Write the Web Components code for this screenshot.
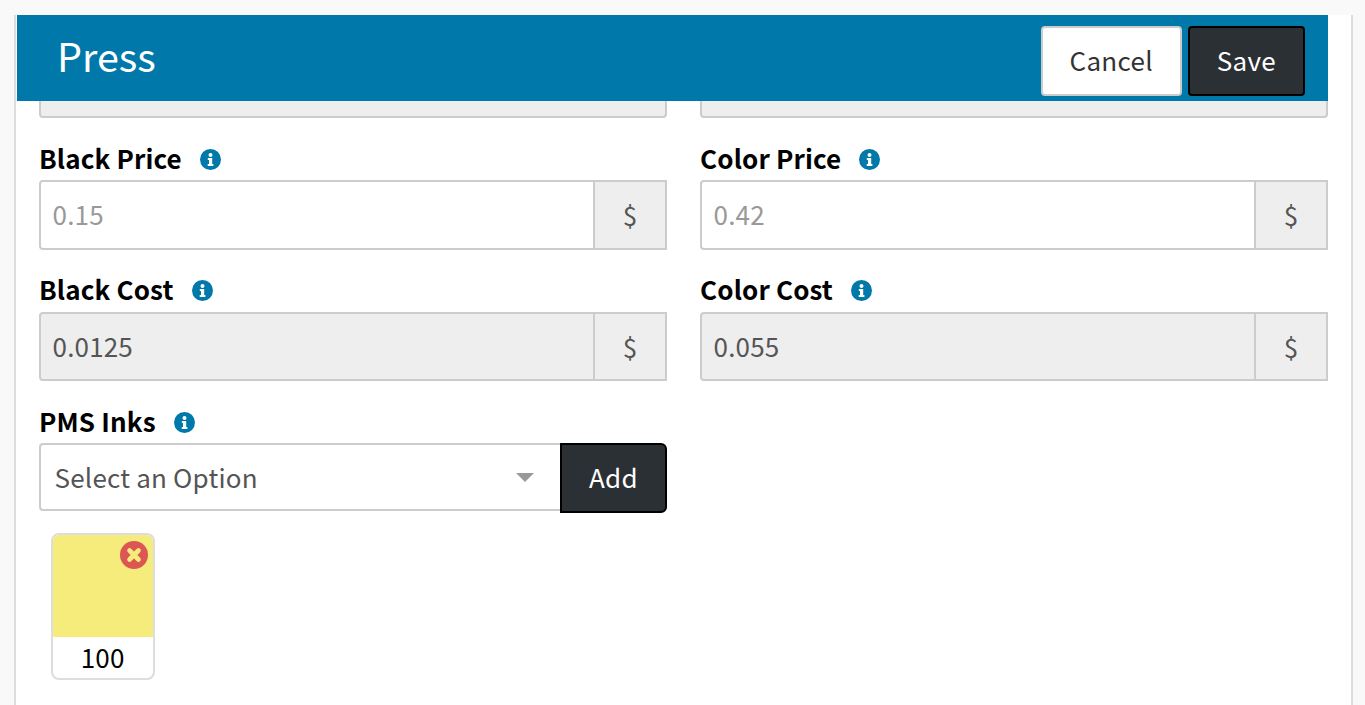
<!DOCTYPE html>
<html>
<head>
<meta charset="utf-8">
<title>Press</title>
<style>
    html, body { margin: 0; height: 705px; overflow: hidden; }
    body {
        background: #f9f9f9;
        font-family: "Noto Sans CJK JP", "Noto Sans", sans-serif;
        padding: 15px 12px 0 14px;
        box-sizing: border-box;
    }
</style>
</head>
<body>
<press-panel>
    <press-header slot="header" title="Press">
        <press-button>Cancel</press-button>
        <press-button dark>Save</press-button>
    </press-header>
    <press-field label="Black Price" placeholder="0.15"></press-field>
    <press-field label="Color Price" placeholder="0.42"></press-field>
    <press-field label="Black Cost" value="0.0125" disabled></press-field>
    <press-field label="Color Cost" value="0.055" disabled></press-field>
    <press-inks label="PMS Inks">
        <press-swatch color="#f5ec7c" name="100"></press-swatch>
    </press-inks>
</press-panel>

<script>
class InfoIcon extends HTMLElement {
    constructor() {
        super();
        this.attachShadow({ mode: 'open' });
        this.shadowRoot.innerHTML = `
            <style>
                :host { display: inline-flex; width: 21px; height: 21px; margin-top: 3px; }
                svg { width: 21px; height: 21px; display: block; }
            </style>
            <svg viewBox="0 0 21 21">
                <circle cx="10.5" cy="10.5" r="10.5" fill="#0178aa"/>
                <circle cx="10.5" cy="6" r="2" fill="#fff"/>
                <path d="M7.8 9h4.4v6h1.2v2H7.7v-2h1.3v-4H7.8z" fill="#fff"/>
            </svg>
        `;
    }
}

class PressButton extends HTMLElement {
    constructor() {
        super();
        this.attachShadow({ mode: 'open' });
        this.shadowRoot.innerHTML = `
            <style>
                :host {
                    display: flex;
                    align-items: center;
                    justify-content: center;
                    box-sizing: border-box;
                    height: 70px;
                    padding: 0 27px 2px;
                    border: 2px solid #ccc;
                    border-radius: 4px;
                    background: #fff;
                    color: #333;
                    font-size: 26px;
                    letter-spacing: 0.3px;
                    line-height: 1;
                }
                :host([dark]) {
                    background: #2b3035;
                    border-color: #000;
                    color: #fff;
                }
            </style>
            <slot></slot>
        `;
    }
}

class PressHeader extends HTMLElement {
    constructor() {
        super();
        this.attachShadow({ mode: 'open' });
        const title = this.getAttribute('title') || '';
        this.removeAttribute('title');
        this.shadowRoot.innerHTML = `
            <style>
                :host {
                    display: flex;
                    align-items: center;
                    justify-content: space-between;
                    box-sizing: border-box;
                    height: 86px;
                    padding: 6px 23px 0 40px;
                    background: #0178aa;
                    color: #fff;
                }
                h1 { margin: 0 0 12px; font-size: 39.5px; font-weight: 400; line-height: 1; }
                .actions { display: flex; gap: 6px; }
            </style>
            <h1>${title}</h1>
            <div class="actions"><slot></slot></div>
        `;
    }
}

class PressField extends HTMLElement {
    constructor() {
        super();
        this.attachShadow({ mode: 'open' });
    }

    connectedCallback() {
        const label = this.getAttribute('label') || '';
        const placeholder = this.getAttribute('placeholder') || '';
        const value = this.getAttribute('value') || '';
        const disabled = this.hasAttribute('disabled');

        this.shadowRoot.innerHTML = `
            <style>
                :host { display: block; }
                .label {
                    display: flex;
                    align-items: center;
                    gap: 18px;
                    box-sizing: border-box;
                    height: 38px;
                    margin-top: 24.4px;
                    padding-bottom: 7px;
                    font-size: 26px;
                    font-weight: 700;
                    color: #000;
                    letter-spacing: 0.15px;
                    line-height: 1;
                }
                .group { display: flex; height: 69.2px; box-sizing: border-box; }
                .input {
                    flex: 1;
                    display: flex;
                    align-items: center;
                    box-sizing: border-box;
                    padding: 0 11.6px 2px;
                    border: 2px solid #ccc;
                    border-radius: 4px 0 0 4px;
                    background: ${disabled ? '#eee' : '#fff'};
                    color: ${disabled ? '#555' : '#999'};
                    font-size: 26px;
                    letter-spacing: 0.15px;
                }
                .addon {
                    width: 72px;
                    display: flex;
                    align-items: center;
                    justify-content: center;
                    box-sizing: border-box;
                    border: 2px solid #ccc;
                    border-left: 0;
                    background: #eee;
                    color: #555;
                    font-size: 26px;
                }
            </style>
            <div class="label">${label}<info-icon></info-icon></div>
            <div class="group">
                <div class="input">${value || placeholder}</div>
                <div class="addon">$</div>
            </div>
        `;
    }
}

class PressSwatch extends HTMLElement {
    constructor() {
        super();
        this.attachShadow({ mode: 'open' });
    }

    connectedCallback() {
        const color = this.getAttribute('color') || '#fff';
        const name = this.getAttribute('name') || '';

        this.shadowRoot.innerHTML = `
            <style>
                :host {
                    display: block;
                    position: relative;
                    box-sizing: border-box;
                    width: 104.5px;
                    height: 147px;
                    border: 2px solid #ddd;
                    border-radius: 8px;
                    background: #fff;
                    overflow: hidden;
                }
                .color { height: 102px; background: ${color}; }
                .name {
                    text-align: center;
                    font-size: 26px;
                    letter-spacing: 0.3px;
                    line-height: 40px;
                    color: #000;
                }
                svg { position: absolute; top: 6px; right: 5.5px; width: 28px; height: 28px; }
            </style>
            <div class="color"></div>
            <div class="name">${name}</div>
            <svg viewBox="0 0 28 28">
                <circle cx="14" cy="14" r="14" fill="#dc5753"/>
                <path d="M9.5 9.5l9 9M18.5 9.5l-9 9" stroke="${color}" stroke-width="4.6" stroke-linecap="round"/>
            </svg>
        `;
    }
}

class PressInks extends HTMLElement {
    constructor() {
        super();
        this.attachShadow({ mode: 'open' });
    }

    connectedCallback() {
        const label = this.getAttribute('label') || '';

        this.shadowRoot.innerHTML = `
            <style>
                :host { display: block; }
                .label {
                    display: flex;
                    align-items: center;
                    gap: 18px;
                    box-sizing: border-box;
                    height: 38px;
                    margin-top: 24px;
                    padding-bottom: 7px;
                    font-size: 26px;
                    font-weight: 700;
                    color: #000;
                    letter-spacing: 0.15px;
                    line-height: 1;
                }
                .row { display: flex; align-items: flex-start; height: 70px; }
                .select {
                    flex: 1;
                    display: flex;
                    align-items: center;
                    justify-content: space-between;
                    box-sizing: border-box;
                    height: 68px;
                    padding: 0 26px 2px 13.5px;
                    border: 2px solid #ccc;
                    border-right: 0;
                    border-radius: 4px 0 0 4px;
                    color: #555;
                    font-size: 26px;
                    letter-spacing: 0.2px;
                }
                .arrow {
                    width: 0;
                    height: 0;
                    margin-top: 2px;
                    border: 9px solid transparent;
                    border-top: 9px solid #999;
                    border-bottom: 0;
                }
                .add {
                    box-sizing: border-box;
                    width: 107px;
                    height: 70px;
                    display: flex;
                    align-items: center;
                    justify-content: center;
                    padding-bottom: 4px;
                    background: #2b3035;
                    border: 2px solid #000;
                    border-radius: 0 6px 6px 0;
                    color: #fff;
                    font-size: 26px;
                    letter-spacing: 0.3px;
                }
                .swatches { display: flex; padding: 20px 0 0 11.5px; }
            </style>
            <div class="label">${label}<info-icon></info-icon></div>
            <div class="row">
                <div class="select">Select an Option<span class="arrow"></span></div>
                <div class="add">Add</div>
            </div>
            <div class="swatches"><slot></slot></div>
        `;
    }
}

class PressPanel extends HTMLElement {
    constructor() {
        super();
        this.attachShadow({ mode: 'open' });
        this.shadowRoot.innerHTML = `
            <style>
                :host {
                    display: block;
                    box-sizing: border-box;
                    width: 1339px;
                    height: 690px;
                    border: solid #ddd;
                    border-width: 0 2px;
                    background: #fff;
                    overflow: hidden;
                }
                .inner { padding: 0 23px 0 1px; }
                .stub {
                    box-sizing: border-box;
                    display: grid;
                    grid-template-columns: 628px 628px;
                    justify-content: space-between;
                    height: 17px;
                    padding-left: 22px;
                }
                .stub div {
                    background: #eee;
                    border: 2px solid #ccc;
                    border-top: 0;
                    border-radius: 0 0 4px 4px;
                }
                .grid {
                    display: grid;
                    grid-template-columns: 628px 628px;
                    justify-content: space-between;
                    padding-left: 22px;
                }
            </style>
            <div class="inner">
                <slot name="header"></slot>
                <div class="stub"><div></div><div></div></div>
                <div class="grid"><slot></slot></div>
            </div>
        `;
    }
}

customElements.define('info-icon', InfoIcon);
customElements.define('press-button', PressButton);
customElements.define('press-header', PressHeader);
customElements.define('press-field', PressField);
customElements.define('press-swatch', PressSwatch);
customElements.define('press-inks', PressInks);
customElements.define('press-panel', PressPanel);
</script>
</body>
</html>
